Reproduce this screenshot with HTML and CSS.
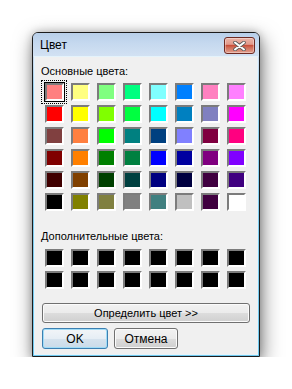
FILE: index.html
```html
<!DOCTYPE html>
<html lang="ru">
<head>
    <meta charset="UTF-8">
    <meta name="viewport" content="width=device-width, initial-scale=1.0">
    <title>Цвет</title>
    <link rel="stylesheet" href="styles.css">
</head>
<body>
    <div class="window">
        <header class="titlebar">
            <p class="title">Цвет</p>
            <button class="close-button" aria-label="Закрыть">
                <svg width="13" height="10" viewBox="0 0 13 10">
                    <path d="M2 1.5 L11 8.5 M11 1.5 L2 8.5" stroke="#5a5a5a" stroke-width="3.6" stroke-linecap="round"/>
                    <path d="M2 1.5 L11 8.5 M11 1.5 L2 8.5" stroke="#ffffff" stroke-width="2" stroke-linecap="round"/>
                </svg>
            </button>
        </header>

        <article class="client">
            <p class="label">Основные цвета:</p>
            <div class="grid basic">
                <span class="swatch selected" style="background:#ff8080"></span>
                <span class="swatch" style="background:#ffff80"></span>
                <span class="swatch" style="background:#80ff80"></span>
                <span class="swatch" style="background:#00ff80"></span>
                <span class="swatch" style="background:#80ffff"></span>
                <span class="swatch" style="background:#0080ff"></span>
                <span class="swatch" style="background:#ff80c0"></span>
                <span class="swatch" style="background:#ff80ff"></span>

                <span class="swatch" style="background:#ff0000"></span>
                <span class="swatch" style="background:#ffff00"></span>
                <span class="swatch" style="background:#80ff00"></span>
                <span class="swatch" style="background:#00ff40"></span>
                <span class="swatch" style="background:#00ffff"></span>
                <span class="swatch" style="background:#0080c0"></span>
                <span class="swatch" style="background:#8080c0"></span>
                <span class="swatch" style="background:#ff00ff"></span>

                <span class="swatch" style="background:#804040"></span>
                <span class="swatch" style="background:#ff8040"></span>
                <span class="swatch" style="background:#00ff00"></span>
                <span class="swatch" style="background:#008080"></span>
                <span class="swatch" style="background:#004080"></span>
                <span class="swatch" style="background:#8080ff"></span>
                <span class="swatch" style="background:#800040"></span>
                <span class="swatch" style="background:#ff0080"></span>

                <span class="swatch" style="background:#800000"></span>
                <span class="swatch" style="background:#ff8000"></span>
                <span class="swatch" style="background:#008000"></span>
                <span class="swatch" style="background:#008040"></span>
                <span class="swatch" style="background:#0000ff"></span>
                <span class="swatch" style="background:#0000a0"></span>
                <span class="swatch" style="background:#800080"></span>
                <span class="swatch" style="background:#8000ff"></span>

                <span class="swatch" style="background:#400000"></span>
                <span class="swatch" style="background:#804000"></span>
                <span class="swatch" style="background:#004000"></span>
                <span class="swatch" style="background:#004040"></span>
                <span class="swatch" style="background:#000080"></span>
                <span class="swatch" style="background:#000040"></span>
                <span class="swatch" style="background:#400040"></span>
                <span class="swatch" style="background:#400080"></span>

                <span class="swatch" style="background:#000000"></span>
                <span class="swatch" style="background:#808000"></span>
                <span class="swatch" style="background:#808040"></span>
                <span class="swatch" style="background:#808080"></span>
                <span class="swatch" style="background:#408080"></span>
                <span class="swatch" style="background:#c0c0c0"></span>
                <span class="swatch" style="background:#400040"></span>
                <span class="swatch" style="background:#ffffff"></span>
            </div>

            <p class="label label-custom">Дополнительные цвета:</p>
            <div class="grid custom">
                <span class="swatch"></span><span class="swatch"></span><span class="swatch"></span><span class="swatch"></span>
                <span class="swatch"></span><span class="swatch"></span><span class="swatch"></span><span class="swatch"></span>
                <span class="swatch"></span><span class="swatch"></span><span class="swatch"></span><span class="swatch"></span>
                <span class="swatch"></span><span class="swatch"></span><span class="swatch"></span><span class="swatch"></span>
            </div>

            <button class="button define-button">Определить цвет &gt;&gt;</button>

            <footer class="button-row">
                <button class="button ok-button">OK</button>
                <button class="button cancel-button">Отмена</button>
            </footer>
        </article>
    </div>
</body>
</html>
```

FILE: styles.css
```css
body {
    margin: 0;
    background-color: #fff;
    font-family: "Liberation Sans", Arial, sans-serif;
    font-size: 11px;
    color: #000;
}

p {
    margin: 0;
}

.window {
    display: flex;
    flex-direction: column;
    width: 228px;
    height: 325px;
    margin: 32px 0 0 32px;
    box-sizing: border-box;
    border: 1px solid #1c1c1c;
    border-radius: 6px 6px 0 0;
    background: linear-gradient(#bcd2eb, #c9dbef 30px, #8fd0ef 60px, #6ec8ee);
    box-shadow: 2px 7px 20px rgba(0, 0, 0, 0.5), 0 0 8px rgba(0, 0, 0, 0.22);
}

/* title bar */
.titlebar {
    display: flex;
    justify-content: space-between;
    align-items: flex-start;
    height: 24px;
    padding: 0 4px 0 7px;
    border-radius: 5px 5px 0 0;
    background: linear-gradient(#b8cfe9, #c6d9ef 45%, #d3e2f3);
}

.title {
    margin-top: 5px;
    font-size: 12px;
    line-height: 15px;
}

.close-button {
    display: flex;
    align-items: center;
    justify-content: center;
    width: 31px;
    height: 17px;
    margin-top: 4px;
    padding: 0;
    border: 1px solid #6e2a22;
    border-radius: 3px;
    background: linear-gradient(#ebb4a8, #e29a8c 42%, #c94f3b 50%, #d06a55 62%, #e2a08f);
    box-shadow: inset 0 0 0 1px rgba(255, 255, 255, 0.35);
}

/* client area */
.client {
    flex: 1;
    margin: 0 2px 2px;
    padding: 0 6px;
    background-color: #f0f0f0;
    box-shadow: 0 0 0 1px #e4f3fb;
}

.label {
    margin-top: 8px;
    line-height: 13px;
}

.label-custom {
    margin-top: 19px;
}

.grid {
    display: grid;
    grid-template-columns: repeat(8, 19px);
    grid-auto-rows: 18px;
    column-gap: 7px;
    row-gap: 4px;
    margin-left: 4px;
}

.basic {
    margin-top: 5px;
}

.custom {
    margin-top: 6px;
}

.swatch {
    position: relative;
    box-sizing: border-box;
    border: 2px solid;
    border-color: #7c7c7c #fff #fff #7c7c7c;
    background-color: #000;
}

.selected {
    box-shadow: 0 0 0 1px #000;
}

.selected::after {
    content: "";
    position: absolute;
    top: -5px;
    left: -6px;
    right: -5px;
    bottom: -5px;
    border: 1px dotted #000;
}

/* buttons */
.button {
    display: block;
    box-sizing: border-box;
    height: 20px;
    padding: 0;
    border: 1px solid #707070;
    border-radius: 3px;
    background: linear-gradient(#f2f2f2, #ebebeb 50%, #dddddd 50%, #cfcfcf);
    box-shadow: inset 0 0 0 1px #fbfbfb;
    font-family: inherit;
    font-size: 11px;
    color: #000;
}

.define-button {
    width: 208px;
    margin: 14px 0 0 1px;
}

.button-row {
    display: flex;
    gap: 6px;
    margin: 5px 0 0 1px;
}

.ok-button {
    width: 66px;
    height: 21px;
    border-color: #3c7fb1;
    background: linear-gradient(#f2f5f8, #e6eef5 50%, #d6e3ee 50%, #cadbe9);
    box-shadow: inset 0 0 0 1px #9fdcf7;
    font-size: 12px;
}

.cancel-button {
    width: 64px;
    height: 21px;
    font-size: 12px;
}
```
